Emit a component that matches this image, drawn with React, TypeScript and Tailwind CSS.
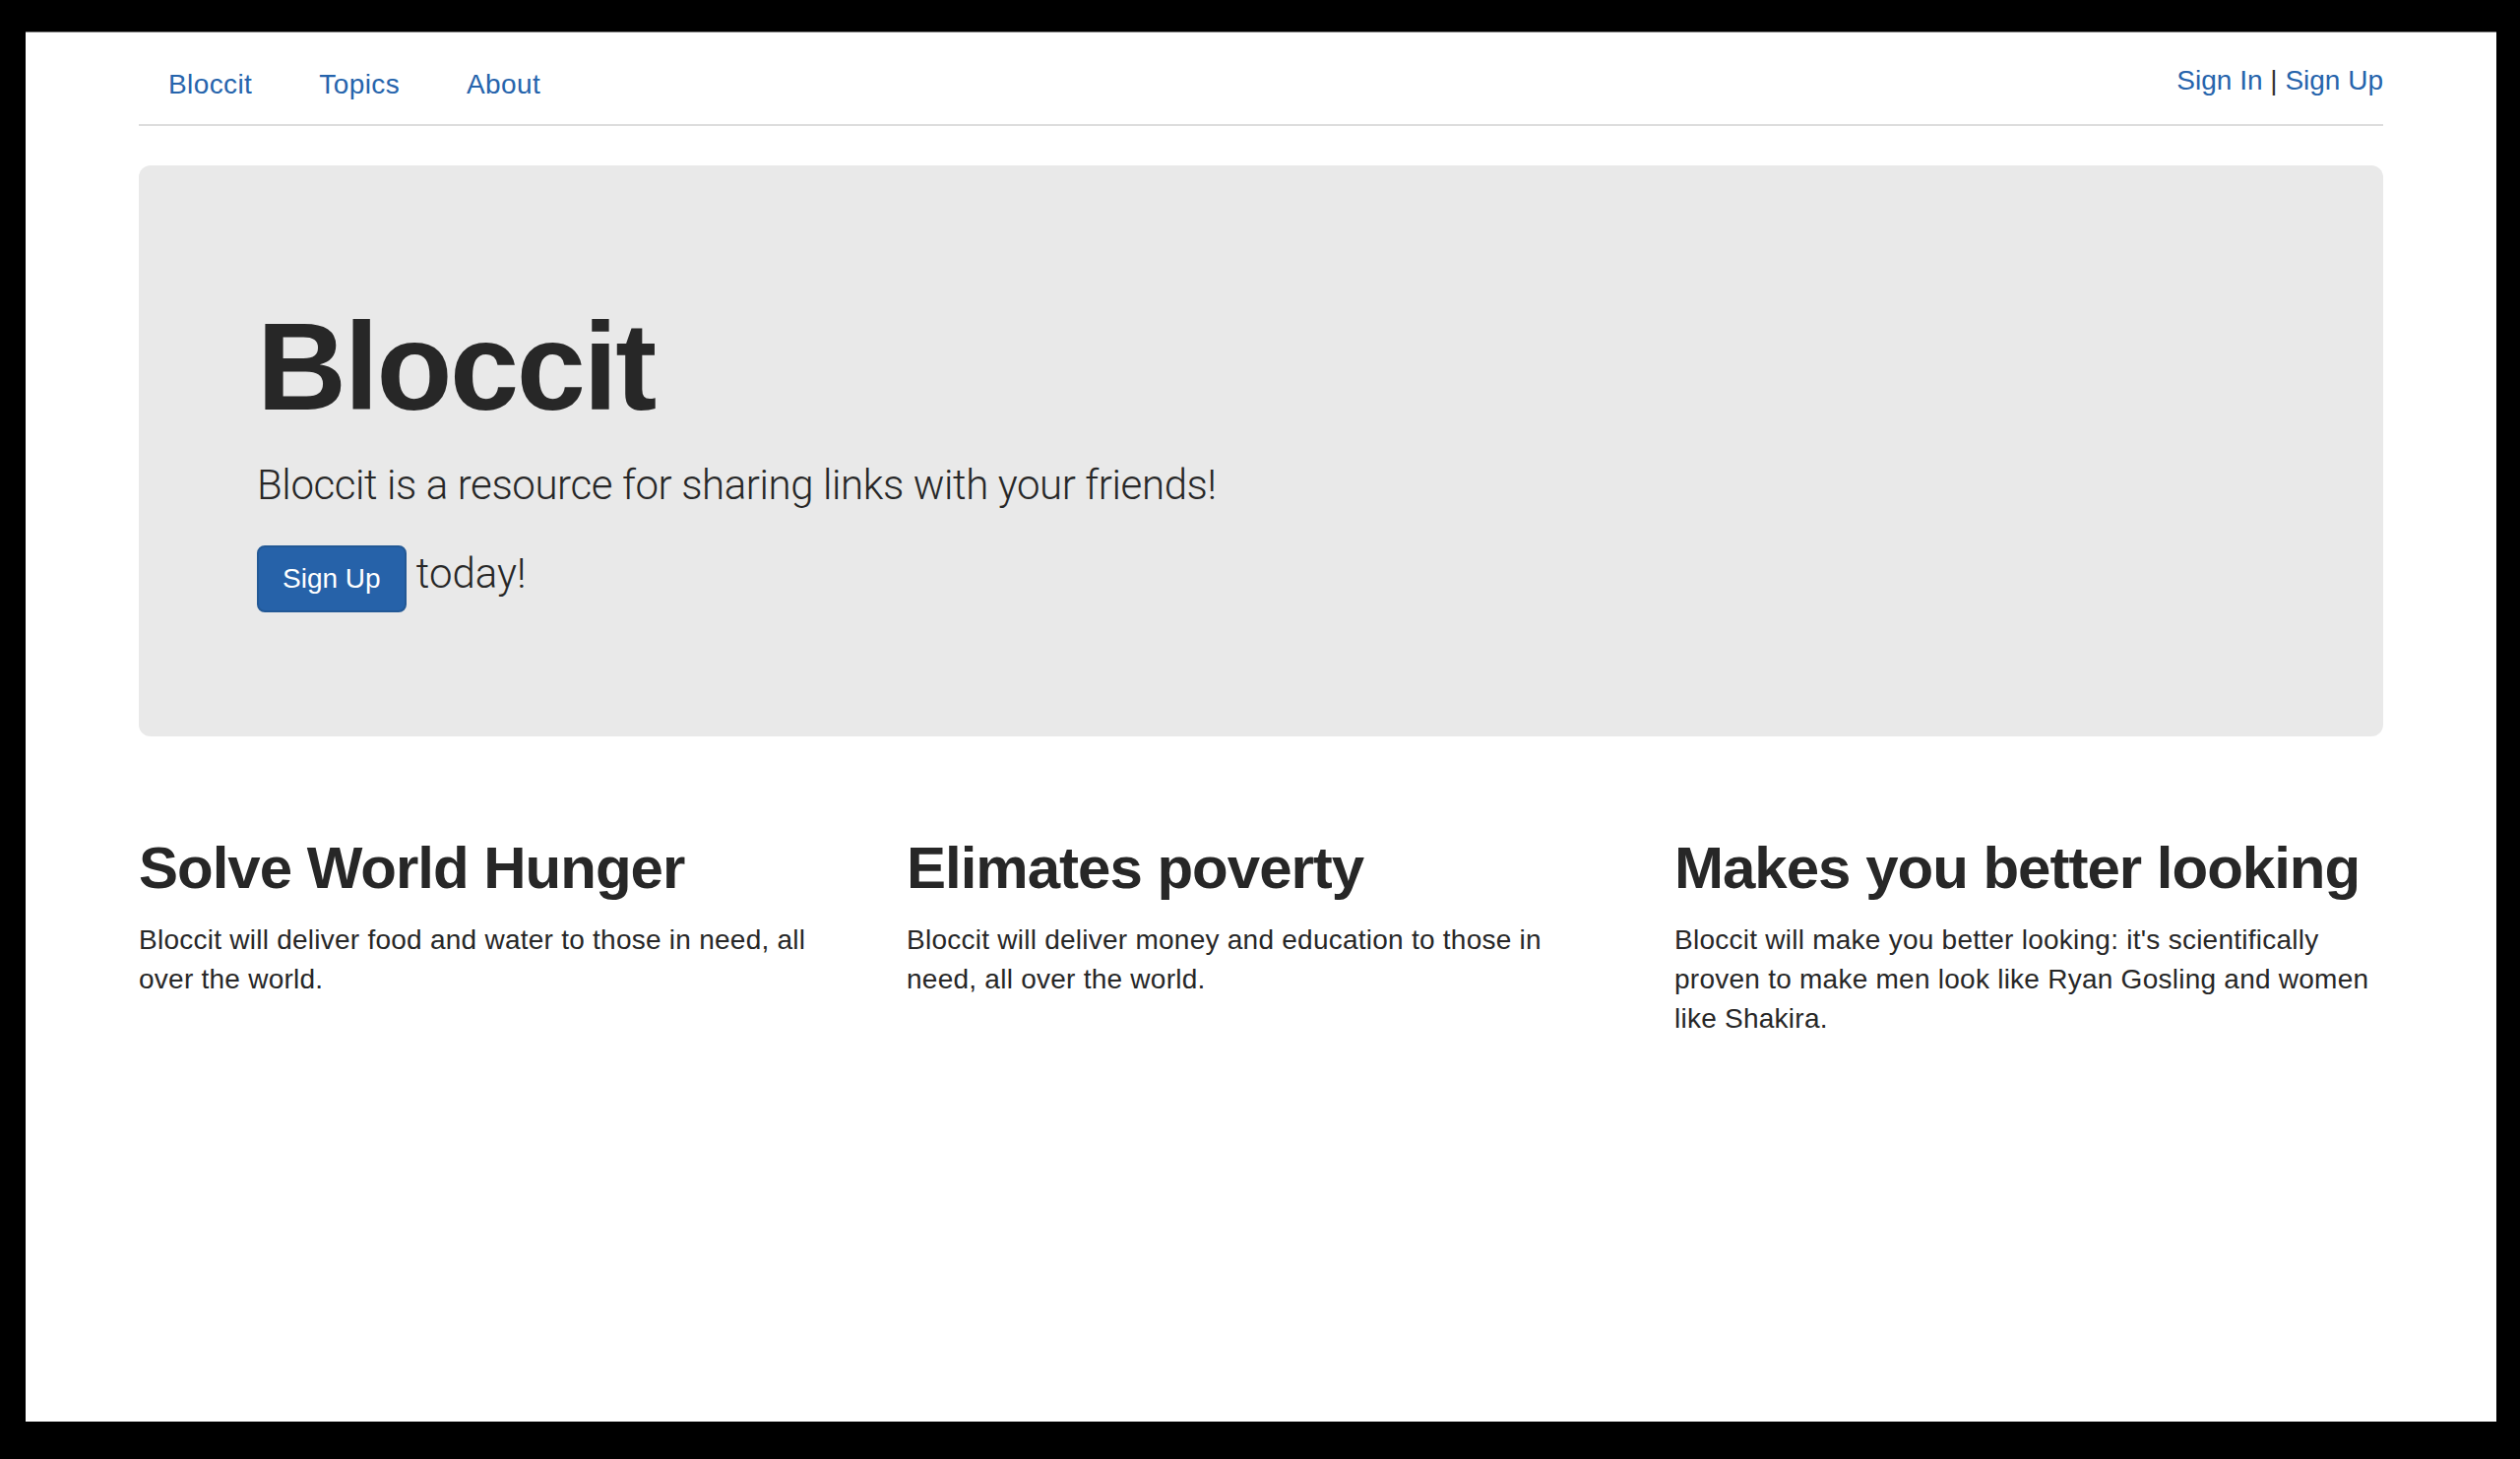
import React from "react";

const features = [
  {
    title: "Solve World Hunger",
    body: "Bloccit will deliver food and water to those in need, all over the world.",
  },
  {
    title: "Elimates poverty",
    body: "Bloccit will deliver money and education to those in need, all over the world.",
  },
  {
    title: "Makes you better looking",
    body: "Bloccit will make you better looking: it's scientifically proven to make men look like Ryan Gosling and women like Shakira.",
  },
];

export default function App() {
  return (
    <div className="h-[1482px] w-full bg-black pt-[32px] pl-[26px] pr-[24px] font-['Liberation_Sans',Arial,sans-serif] text-[#272727]">
      <div className="h-[1412px] w-full border-t border-[#7a7a7a] bg-white pt-[13px]">
        <div className="mx-auto w-[2280px]">
          {/* Top nav */}
          <nav className="flex justify-between border-b-2 border-[#dddddd]">
            <ul className="flex gap-[8px]">
              {["Bloccit", "Topics", "About"].map((item) => (
                <li key={item}>
                  <a href="#" className="block px-[30px] py-[20px] text-[28px] leading-[40px] tracking-[0.4px] text-[#2664ac]">
                    {item}
                  </a>
                </li>
              ))}
            </ul>
            <div className="pt-[16px] text-[28px] leading-[40px]">
              <a href="#" className="text-[#2664ac]">Sign In</a>
              <span className="text-[#333]"> | </span>
              <a href="#" className="text-[#2664ac]">Sign Up</a>
            </div>
          </nav>

          {/* Jumbotron */}
          <div className="mt-[40px] rounded-[12px] bg-[#e9e9e9] px-[120px] py-[96px]">
            <h1 className="mt-[40px] mb-[20px] text-[126px] leading-[1.1] font-bold tracking-[-2.3px]">Bloccit</h1>
            <p className="mb-[30px] font-['Roboto',sans-serif] text-[42px] leading-[60px] font-light tracking-[-0.4px]">
              Bloccit is a resource for sharing links with your friends!
            </p>
            <p className="mb-[30px] font-['Roboto',sans-serif] text-[42px] leading-[60px] font-light">
              <a
                href="#"
                className="inline-block rounded-[8px] border-2 border-[#235996] bg-[#2662a9] px-[24px] py-[12px] font-['Liberation_Sans',Arial,sans-serif] text-[28px] leading-[40px] font-normal text-white"
              >
                Sign Up
              </a>{" "}
              today!
            </p>
          </div>

          {/* Feature columns */}
          <div className="mt-[60px] grid grid-cols-3 gap-[60px]">
            {features.map((f) => (
              <div key={f.title} className="pt-[1px]">
                <h2 className="mt-[40px] mb-[20px] whitespace-nowrap text-[60px] leading-[1.1] font-bold tracking-[-1px]">
                  {f.title}
                </h2>
                <p className="text-[28px] leading-[40px] tracking-[0.25px]">{f.body}</p>
              </div>
            ))}
          </div>
        </div>
      </div>
    </div>
  );
}
